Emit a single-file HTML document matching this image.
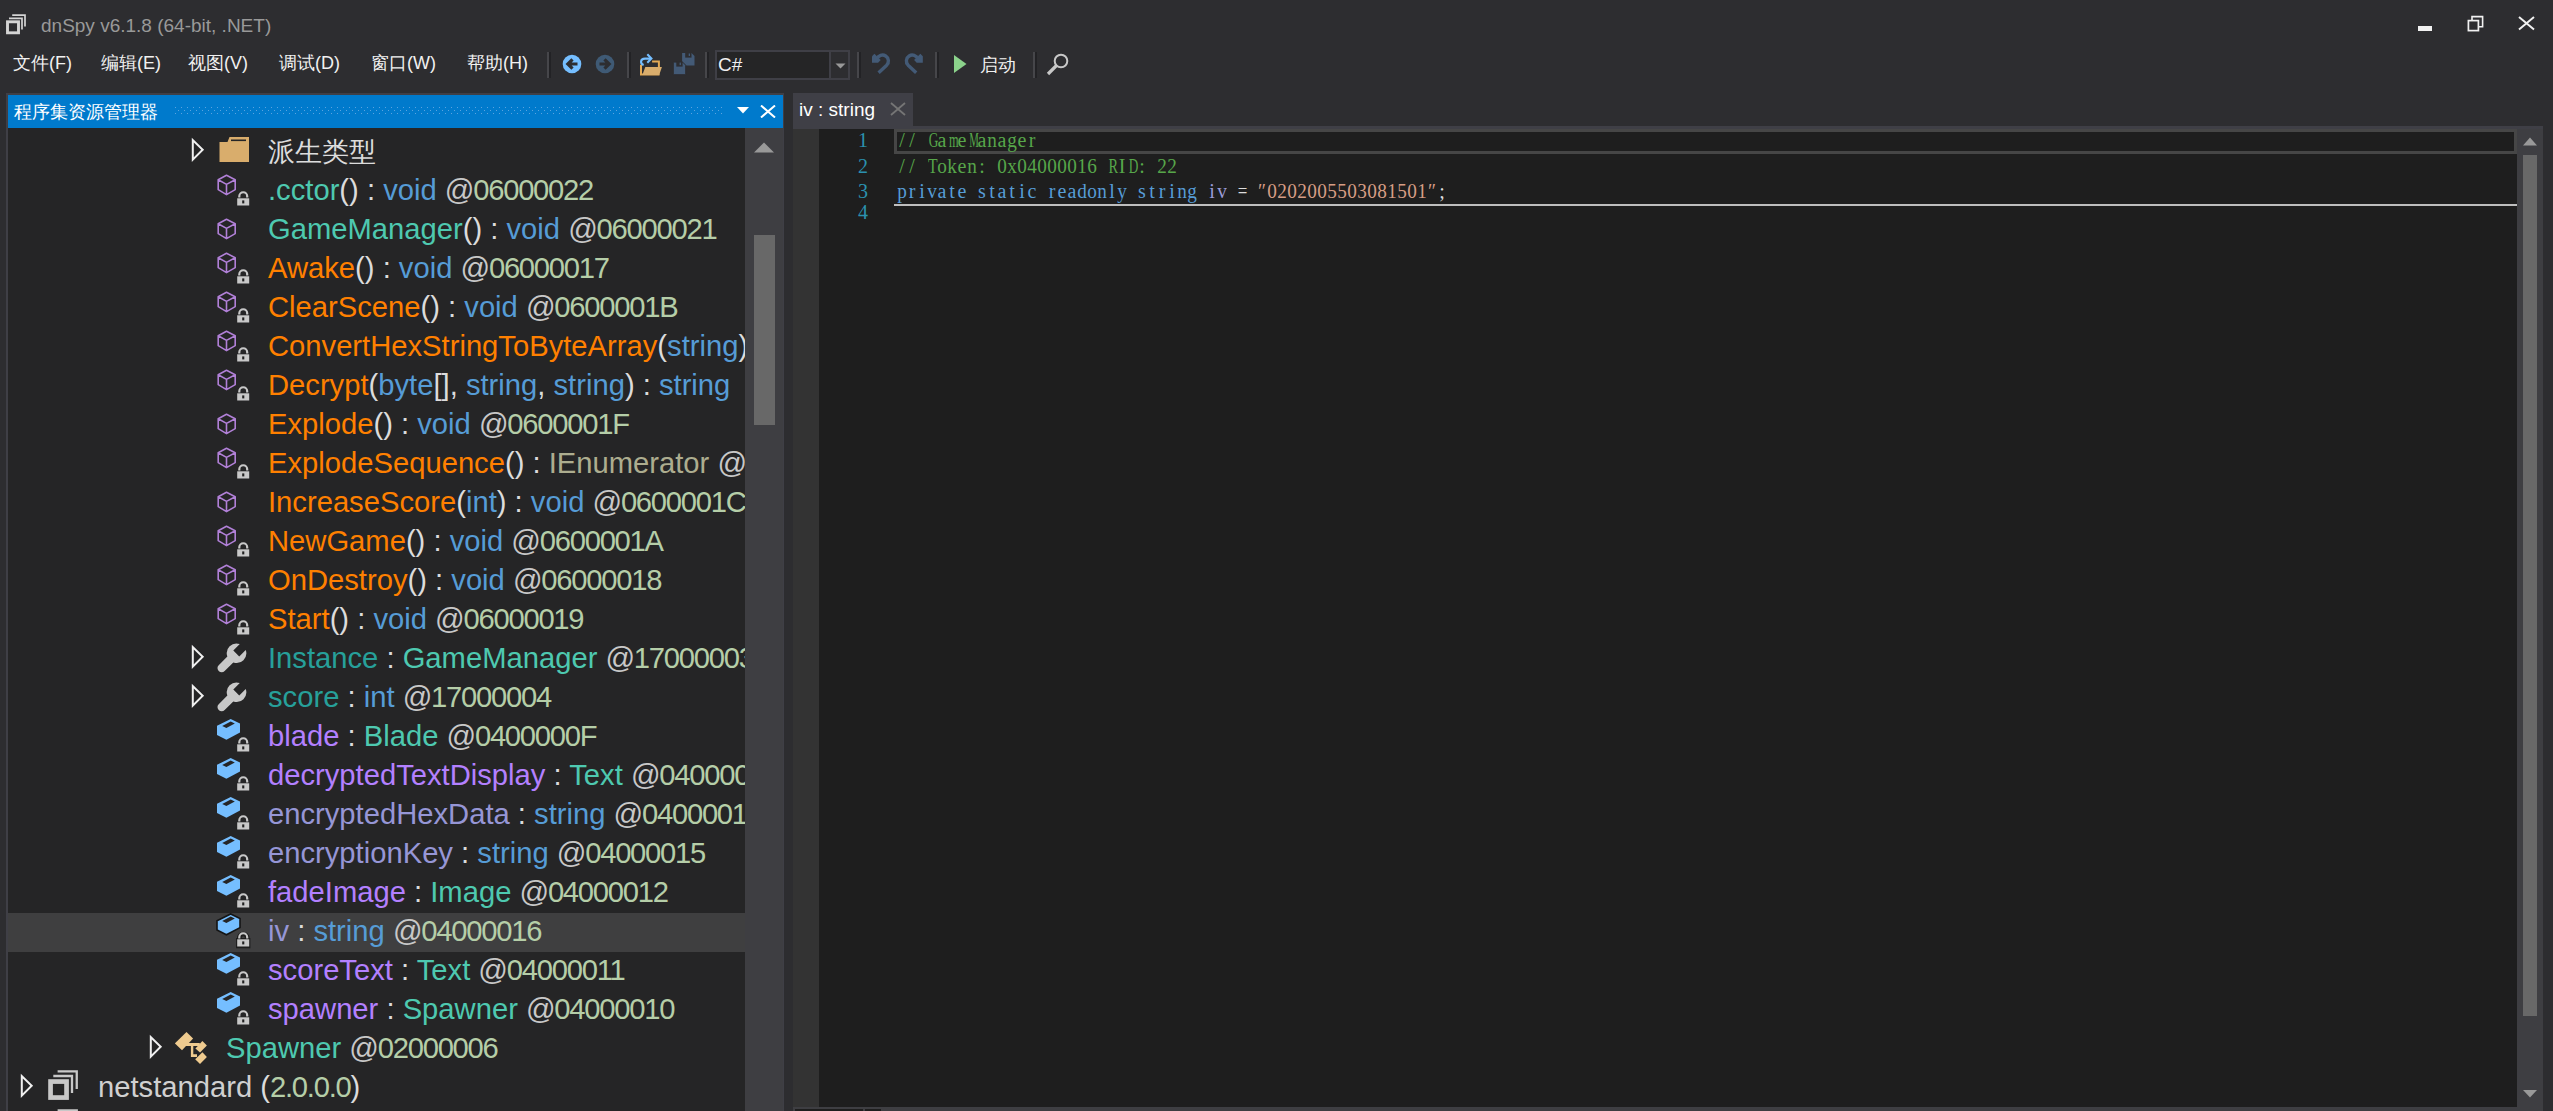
<!DOCTYPE html>
<html><head><meta charset="utf-8"><style>
html,body{margin:0;padding:0;}
body{width:2553px;height:1111px;overflow:hidden;background:#2D2D30;position:relative;font-family:"Liberation Sans",sans-serif;}
.a{position:absolute;}
.tt{position:absolute;white-space:pre;font-size:29.2px;line-height:39px;height:39px;letter-spacing:0px}
.menu{position:absolute;top:50px;font-size:18px;line-height:26px;color:#F1F1F1;white-space:pre}
.sep{position:absolute;top:52px;width:2px;height:26px;background:#46464A;border-right:2px solid #222225}
.code{position:absolute;left:897px;font-family:"Liberation Serif",serif;font-size:20px;white-space:pre;line-height:20px}
.code i{font-style:normal;display:inline-block;width:10px;text-align:center}
.ln{position:absolute;left:840px;width:28px;text-align:right;font-family:"Liberation Serif",serif;font-size:20px;color:#2B91AF;line-height:20px}
</style></head><body>
<!-- title bar -->
<svg class="a" style="left:4px;top:12px" width="26" height="26" viewBox="0 0 26 26">
 <rect x="3.5" y="9.8" width="11" height="11" fill="none" stroke="#D4D4D4" stroke-width="2.9"/>
 <path d="M5 6.3 H18 V17.5" fill="none" stroke="#D4D4D4" stroke-width="1.7"/>
 <path d="M8.2 3.1 H21 V14.5" fill="none" stroke="#D4D4D4" stroke-width="1.7"/>
</svg>
<div class="a" style="left:41px;top:13.6px;font-size:19px;line-height:24px;color:#999999;white-space:pre">dnSpy v6.1.8 (64-bit, .NET)</div>
<div class="a" style="left:2418px;top:26px;width:14px;height:5px;background:#F1F1F1"></div>
<svg class="a" style="left:2467px;top:15px" width="18" height="18" viewBox="0 0 18 18"><rect x="1.4" y="5.6" width="10" height="10" fill="none" stroke="#F1F1F1" stroke-width="1.7"/><path d="M5 5.6 V1.6 H15.6 V11.8 H11.4" fill="none" stroke="#F1F1F1" stroke-width="1.6"/></svg>
<svg class="a" style="left:2518px;top:16px" width="17" height="15" viewBox="0 0 17 15"><path d="M1 1 L16 13.5 M16 1 L1 13.5" stroke="#F1F1F1" stroke-width="2"/></svg>

<!-- menu -->
<div class="menu" style="left:13px">文件(F)</div>
<div class="menu" style="left:101px">编辑(E)</div>
<div class="menu" style="left:188px">视图(V)</div>
<div class="menu" style="left:279px">调试(D)</div>
<div class="menu" style="left:371px">窗口(W)</div>
<div class="menu" style="left:467px">帮助(H)</div>
<div class="sep" style="left:547px"></div>
<svg class="a" style="left:562px;top:54px" width="20" height="20" viewBox="0 0 20 20"><circle cx="10" cy="10" r="9.3" fill="#75BEFF"/><path d="M15.5 10 H6.5 M10.5 5.3 L5.8 10 L10.5 14.7" fill="none" stroke="#2D2D30" stroke-width="3.2"/></svg>
<svg class="a" style="left:595px;top:54px" width="20" height="20" viewBox="0 0 20 20"><circle cx="10" cy="10" r="9.3" fill="#3F5A75"/><path d="M4.5 10 H13.5 M9.5 5.3 L14.2 10 L9.5 14.7" fill="none" stroke="#2D2D30" stroke-width="3.2"/></svg>
<div class="sep" style="left:627px"></div>
<svg class="a" style="left:636px;top:50px" width="64" height="28" viewBox="0 0 64 28">
 <path d="M5 14.8 V24.4 H23.5 M16.1 11.45 H22.9 V17.5" fill="none" stroke="#E3AA55" stroke-width="2"/>
 <path d="M6.3 24.9 L9.3 17.1 L25.9 17.1 L23.2 24.9 Z" fill="#D9AD6C"/>
 <path d="M7.6 15 C4 13.6 4 8.6 9 8.6 H15" fill="none" stroke="#75BEFF" stroke-width="2.1"/>
 <path d="M11.3 4.3 L15.4 8.5 L11.3 12.7" fill="none" stroke="#75BEFF" stroke-width="2.1"/>
 <path d="M46.1 3 H55.5 L58.5 6.1 V15.6 H46.1 Z" fill="#435A76"/>
 <rect x="49.2" y="3" width="6.3" height="4.6" fill="#2D2D30"/><rect x="52.7" y="3.5" width="1.3" height="2.5" fill="#435A76"/>
 <path d="M37.3 12.1 H46.6 L49.7 15.2 V24.7 H37.3 Z" fill="#435A76" stroke="#2D2D30" stroke-width="1"/>
 <rect x="40.3" y="11.6" width="6.3" height="5" fill="#2D2D30"/><rect x="43.6" y="12.6" width="1.3" height="2.5" fill="#435A76"/>
</svg>
<div class="sep" style="left:705px"></div>
<div class="a" style="left:715px;top:50px;width:131px;height:26px;border:2px solid #3F3F46;background:#252526"></div>
<div class="a" style="left:829px;top:52px;width:2px;height:26px;background:#3F3F46"></div>
<div class="a" style="left:831px;top:52px;width:17px;height:26px;background:#2D2D30"></div>
<svg class="a" style="left:835px;top:63px" width="11" height="6" viewBox="0 0 11 6"><path d="M0.5 0.5 H10.5 L5.5 5.5 Z" fill="#999999"/></svg>
<div class="a" style="left:718px;top:52px;font-size:19px;line-height:26px;color:#F1F1F1">C#</div>
<div class="sep" style="left:857px"></div>
<svg class="a" style="left:866px;top:50px" width="64" height="28" viewBox="0 0 64 28">
 <path d="M10.96 8.98 A5.9 5.9 0 1 1 20.67 15.17 L12.6 22.7" fill="none" stroke="#435A76" stroke-width="3.4"/>
 <path d="M6 6.3 L8.4 3.8 L14.7 9.9 L12.1 12.8 L6 12.8 Z" fill="#435A76"/>
 <g transform="translate(62.8 0) scale(-1 1)">
 <path d="M10.96 8.98 A5.9 5.9 0 1 1 20.67 15.17 L12.6 22.7" fill="none" stroke="#435A76" stroke-width="3.4"/>
 <path d="M6 6.3 L8.4 3.8 L14.7 9.9 L12.1 12.8 L6 12.8 Z" fill="#435A76"/>
 </g>
</svg>
<div class="sep" style="left:935px"></div>
<svg class="a" style="left:954px;top:55px" width="13" height="19" viewBox="0 0 13 19"><path d="M0 0 L12.5 9 L0 18 Z" fill="#8BD28B"/></svg>
<div class="menu" style="left:980px;top:51.5px">启动</div>
<div class="sep" style="left:1033px"></div>
<svg class="a" style="left:1046px;top:53px" width="23" height="23" viewBox="0 0 23 23"><circle cx="15" cy="8" r="6.3" fill="none" stroke="#C8C8C8" stroke-width="2"/><path d="M10.5 12.5 L2 21" stroke="#C8C8C8" stroke-width="3.2"/></svg>

<!-- left panel -->
<div class="a" style="left:6px;top:93px;width:778px;height:1018px;background:#3F3F46"></div>
<div class="a" style="left:8px;top:95px;width:775px;height:33px;background:#007ACC"></div>
<div class="a" style="left:14px;top:99px;font-size:18px;line-height:26px;color:#FFFFFF;white-space:pre">程序集资源管理器</div>
<svg class="a" style="left:175px;top:107px" width="548" height="8">
 <defs><pattern id="dots" width="6" height="6" patternUnits="userSpaceOnUse"><rect x="0" y="0" width="1" height="1" fill="#5BA4E0"/><rect x="3" y="3" width="1" height="1" fill="#5BA4E0"/></pattern></defs>
 <rect x="0" y="0" width="548" height="7" fill="url(#dots)"/>
</svg>
<svg class="a" style="left:737px;top:107px" width="12" height="7" viewBox="0 0 12 7"><path d="M0 0 H12 L6 6.5 Z" fill="#FFFFFF"/></svg>
<svg class="a" style="left:760px;top:105px" width="16" height="13" viewBox="0 0 16 13"><path d="M1 0.5 L15 12.5 M15 0.5 L1 12.5" stroke="#FFFFFF" stroke-width="2"/></svg>
<div class="a" style="left:8px;top:128px;width:737px;height:983px;background:#252526;overflow:hidden">
<div class="a" style="left:-8px;top:-128px;width:2553px;height:1111px">
<svg style="position:absolute;left:191px;top:137px" width="15" height="26" viewBox="0 0 15 26"><path fill-rule="evenodd" d="M0.8 0.7 L13.1 12.85 L0.8 25 Z M2.8 5.5 L10.24 12.85 L2.8 20.2 Z" fill="#F0F0F0"/></svg>
<svg style="position:absolute;left:219px;top:136px" width="31" height="27" viewBox="0 0 31 27"><path d="M0.5 6 L8.5 6 L10.5 1 L30 1 L30 26 L0.5 26 Z" fill="#D9AD6C"/><path d="M12 4.3 L27 4.3" stroke="#252526" stroke-width="1.6"/></svg>
<div class="tt" style="left:268px;top:131.5px"><span style="color:#DCDCDC;font-size:27px">派生类型</span></div>
<svg style="position:absolute;left:217px;top:174px" width="20" height="23" viewBox="0 0 20 23"><path d="M9.5 1.2 L18.2 5.8 L18.2 15.6 L9.5 20.6 L1.2 15.6 L1.2 5.8 Z M1.2 5.8 L9.5 10.4 L18.2 5.8 M9.5 10.4 L9.5 20.6" fill="none" stroke="#B180D7" stroke-width="1.6" stroke-linejoin="round"/></svg>
<svg style="position:absolute;left:235px;top:188.5px" width="17" height="20" viewBox="-2 -2 17 20"><path d="M2.3 6.6 V5.2 A3.95 3.95 0 0 1 10.2 5.2 V6.6" fill="none" stroke="#C8C8C8" stroke-width="2.2"/><rect x="0.2" y="7.3" width="12" height="7.2" fill="#C8C8C8"/><rect x="5.2" y="9.4" width="2.1" height="3" fill="#202020"/></svg>
<div class="tt" style="left:268px;top:170.5px"><span style="color:#4EC9B0">.cctor</span><span style="color:#DCDCDC">() : </span><span style="color:#569CD6">void</span><span style="color:#DCDCDC"> </span><span style="color:#C8C8C8;letter-spacing:-1.25px">@</span><span style="color:#B5CEA8;letter-spacing:-1.25px">06000022</span></div>
<svg style="position:absolute;left:217px;top:218px" width="20" height="23" viewBox="0 0 20 23"><path d="M9.5 1.2 L18.2 5.8 L18.2 15.6 L9.5 20.6 L1.2 15.6 L1.2 5.8 Z M1.2 5.8 L9.5 10.4 L18.2 5.8 M9.5 10.4 L9.5 20.6" fill="none" stroke="#B180D7" stroke-width="1.6" stroke-linejoin="round"/></svg>
<div class="tt" style="left:268px;top:209.5px"><span style="color:#4EC9B0">GameManager</span><span style="color:#DCDCDC">() : </span><span style="color:#569CD6">void</span><span style="color:#DCDCDC"> </span><span style="color:#C8C8C8;letter-spacing:-1.25px">@</span><span style="color:#B5CEA8;letter-spacing:-1.25px">06000021</span></div>
<svg style="position:absolute;left:217px;top:252px" width="20" height="23" viewBox="0 0 20 23"><path d="M9.5 1.2 L18.2 5.8 L18.2 15.6 L9.5 20.6 L1.2 15.6 L1.2 5.8 Z M1.2 5.8 L9.5 10.4 L18.2 5.8 M9.5 10.4 L9.5 20.6" fill="none" stroke="#B180D7" stroke-width="1.6" stroke-linejoin="round"/></svg>
<svg style="position:absolute;left:235px;top:266.5px" width="17" height="20" viewBox="-2 -2 17 20"><path d="M2.3 6.6 V5.2 A3.95 3.95 0 0 1 10.2 5.2 V6.6" fill="none" stroke="#C8C8C8" stroke-width="2.2"/><rect x="0.2" y="7.3" width="12" height="7.2" fill="#C8C8C8"/><rect x="5.2" y="9.4" width="2.1" height="3" fill="#202020"/></svg>
<div class="tt" style="left:268px;top:248.5px"><span style="color:#FF8000">Awake</span><span style="color:#DCDCDC">() : </span><span style="color:#569CD6">void</span><span style="color:#DCDCDC"> </span><span style="color:#C8C8C8;letter-spacing:-1.25px">@</span><span style="color:#B5CEA8;letter-spacing:-1.25px">06000017</span></div>
<svg style="position:absolute;left:217px;top:291px" width="20" height="23" viewBox="0 0 20 23"><path d="M9.5 1.2 L18.2 5.8 L18.2 15.6 L9.5 20.6 L1.2 15.6 L1.2 5.8 Z M1.2 5.8 L9.5 10.4 L18.2 5.8 M9.5 10.4 L9.5 20.6" fill="none" stroke="#B180D7" stroke-width="1.6" stroke-linejoin="round"/></svg>
<svg style="position:absolute;left:235px;top:305.5px" width="17" height="20" viewBox="-2 -2 17 20"><path d="M2.3 6.6 V5.2 A3.95 3.95 0 0 1 10.2 5.2 V6.6" fill="none" stroke="#C8C8C8" stroke-width="2.2"/><rect x="0.2" y="7.3" width="12" height="7.2" fill="#C8C8C8"/><rect x="5.2" y="9.4" width="2.1" height="3" fill="#202020"/></svg>
<div class="tt" style="left:268px;top:287.5px"><span style="color:#FF8000">ClearScene</span><span style="color:#DCDCDC">() : </span><span style="color:#569CD6">void</span><span style="color:#DCDCDC"> </span><span style="color:#C8C8C8;letter-spacing:-1.25px">@</span><span style="color:#B5CEA8;letter-spacing:-1.25px">0600001B</span></div>
<svg style="position:absolute;left:217px;top:330px" width="20" height="23" viewBox="0 0 20 23"><path d="M9.5 1.2 L18.2 5.8 L18.2 15.6 L9.5 20.6 L1.2 15.6 L1.2 5.8 Z M1.2 5.8 L9.5 10.4 L18.2 5.8 M9.5 10.4 L9.5 20.6" fill="none" stroke="#B180D7" stroke-width="1.6" stroke-linejoin="round"/></svg>
<svg style="position:absolute;left:235px;top:344.5px" width="17" height="20" viewBox="-2 -2 17 20"><path d="M2.3 6.6 V5.2 A3.95 3.95 0 0 1 10.2 5.2 V6.6" fill="none" stroke="#C8C8C8" stroke-width="2.2"/><rect x="0.2" y="7.3" width="12" height="7.2" fill="#C8C8C8"/><rect x="5.2" y="9.4" width="2.1" height="3" fill="#202020"/></svg>
<div class="tt" style="left:268px;top:326.5px"><span style="color:#FF8000">ConvertHexStringToByteArray</span><span style="color:#DCDCDC">(</span><span style="color:#569CD6">string</span><span style="color:#DCDCDC">) : </span><span style="color:#569CD6">byte</span><span style="color:#DCDCDC">[] </span><span style="color:#DCDCDC"> </span><span style="color:#C8C8C8;letter-spacing:-1.25px">@</span><span style="color:#B5CEA8;letter-spacing:-1.25px">0600001E</span></div>
<svg style="position:absolute;left:217px;top:369px" width="20" height="23" viewBox="0 0 20 23"><path d="M9.5 1.2 L18.2 5.8 L18.2 15.6 L9.5 20.6 L1.2 15.6 L1.2 5.8 Z M1.2 5.8 L9.5 10.4 L18.2 5.8 M9.5 10.4 L9.5 20.6" fill="none" stroke="#B180D7" stroke-width="1.6" stroke-linejoin="round"/></svg>
<svg style="position:absolute;left:235px;top:383.5px" width="17" height="20" viewBox="-2 -2 17 20"><path d="M2.3 6.6 V5.2 A3.95 3.95 0 0 1 10.2 5.2 V6.6" fill="none" stroke="#C8C8C8" stroke-width="2.2"/><rect x="0.2" y="7.3" width="12" height="7.2" fill="#C8C8C8"/><rect x="5.2" y="9.4" width="2.1" height="3" fill="#202020"/></svg>
<div class="tt" style="left:268px;top:365.5px"><span style="color:#FF8000">Decrypt</span><span style="color:#DCDCDC">(</span><span style="color:#569CD6">byte</span><span style="color:#DCDCDC">[], </span><span style="color:#569CD6">string</span><span style="color:#DCDCDC">, </span><span style="color:#569CD6">string</span><span style="color:#DCDCDC">) : </span><span style="color:#569CD6">string</span></div>
<svg style="position:absolute;left:217px;top:413px" width="20" height="23" viewBox="0 0 20 23"><path d="M9.5 1.2 L18.2 5.8 L18.2 15.6 L9.5 20.6 L1.2 15.6 L1.2 5.8 Z M1.2 5.8 L9.5 10.4 L18.2 5.8 M9.5 10.4 L9.5 20.6" fill="none" stroke="#B180D7" stroke-width="1.6" stroke-linejoin="round"/></svg>
<div class="tt" style="left:268px;top:404.5px"><span style="color:#FF8000">Explode</span><span style="color:#DCDCDC">() : </span><span style="color:#569CD6">void</span><span style="color:#DCDCDC"> </span><span style="color:#C8C8C8;letter-spacing:-1.25px">@</span><span style="color:#B5CEA8;letter-spacing:-1.25px">0600001F</span></div>
<svg style="position:absolute;left:217px;top:447px" width="20" height="23" viewBox="0 0 20 23"><path d="M9.5 1.2 L18.2 5.8 L18.2 15.6 L9.5 20.6 L1.2 15.6 L1.2 5.8 Z M1.2 5.8 L9.5 10.4 L18.2 5.8 M9.5 10.4 L9.5 20.6" fill="none" stroke="#B180D7" stroke-width="1.6" stroke-linejoin="round"/></svg>
<svg style="position:absolute;left:235px;top:461.5px" width="17" height="20" viewBox="-2 -2 17 20"><path d="M2.3 6.6 V5.2 A3.95 3.95 0 0 1 10.2 5.2 V6.6" fill="none" stroke="#C8C8C8" stroke-width="2.2"/><rect x="0.2" y="7.3" width="12" height="7.2" fill="#C8C8C8"/><rect x="5.2" y="9.4" width="2.1" height="3" fill="#202020"/></svg>
<div class="tt" style="left:268px;top:443.5px"><span style="color:#FF8000">ExplodeSequence</span><span style="color:#DCDCDC">() : </span><span style="color:#ADAD8F">IEnumerator</span><span style="color:#DCDCDC"> </span><span style="color:#C8C8C8;letter-spacing:-1.25px">@</span><span style="color:#B5CEA8;letter-spacing:-1.25px">06000020</span></div>
<svg style="position:absolute;left:217px;top:491px" width="20" height="23" viewBox="0 0 20 23"><path d="M9.5 1.2 L18.2 5.8 L18.2 15.6 L9.5 20.6 L1.2 15.6 L1.2 5.8 Z M1.2 5.8 L9.5 10.4 L18.2 5.8 M9.5 10.4 L9.5 20.6" fill="none" stroke="#B180D7" stroke-width="1.6" stroke-linejoin="round"/></svg>
<div class="tt" style="left:268px;top:482.5px"><span style="color:#FF8000">IncreaseScore</span><span style="color:#DCDCDC">(</span><span style="color:#569CD6">int</span><span style="color:#DCDCDC">) : </span><span style="color:#569CD6">void</span><span style="color:#DCDCDC"> </span><span style="color:#C8C8C8;letter-spacing:-1.25px">@</span><span style="color:#B5CEA8;letter-spacing:-1.25px">0600001C</span></div>
<svg style="position:absolute;left:217px;top:525px" width="20" height="23" viewBox="0 0 20 23"><path d="M9.5 1.2 L18.2 5.8 L18.2 15.6 L9.5 20.6 L1.2 15.6 L1.2 5.8 Z M1.2 5.8 L9.5 10.4 L18.2 5.8 M9.5 10.4 L9.5 20.6" fill="none" stroke="#B180D7" stroke-width="1.6" stroke-linejoin="round"/></svg>
<svg style="position:absolute;left:235px;top:539.5px" width="17" height="20" viewBox="-2 -2 17 20"><path d="M2.3 6.6 V5.2 A3.95 3.95 0 0 1 10.2 5.2 V6.6" fill="none" stroke="#C8C8C8" stroke-width="2.2"/><rect x="0.2" y="7.3" width="12" height="7.2" fill="#C8C8C8"/><rect x="5.2" y="9.4" width="2.1" height="3" fill="#202020"/></svg>
<div class="tt" style="left:268px;top:521.5px"><span style="color:#FF8000">NewGame</span><span style="color:#DCDCDC">() : </span><span style="color:#569CD6">void</span><span style="color:#DCDCDC"> </span><span style="color:#C8C8C8;letter-spacing:-1.25px">@</span><span style="color:#B5CEA8;letter-spacing:-1.25px">0600001A</span></div>
<svg style="position:absolute;left:217px;top:564px" width="20" height="23" viewBox="0 0 20 23"><path d="M9.5 1.2 L18.2 5.8 L18.2 15.6 L9.5 20.6 L1.2 15.6 L1.2 5.8 Z M1.2 5.8 L9.5 10.4 L18.2 5.8 M9.5 10.4 L9.5 20.6" fill="none" stroke="#B180D7" stroke-width="1.6" stroke-linejoin="round"/></svg>
<svg style="position:absolute;left:235px;top:578.5px" width="17" height="20" viewBox="-2 -2 17 20"><path d="M2.3 6.6 V5.2 A3.95 3.95 0 0 1 10.2 5.2 V6.6" fill="none" stroke="#C8C8C8" stroke-width="2.2"/><rect x="0.2" y="7.3" width="12" height="7.2" fill="#C8C8C8"/><rect x="5.2" y="9.4" width="2.1" height="3" fill="#202020"/></svg>
<div class="tt" style="left:268px;top:560.5px"><span style="color:#FF8000">OnDestroy</span><span style="color:#DCDCDC">() : </span><span style="color:#569CD6">void</span><span style="color:#DCDCDC"> </span><span style="color:#C8C8C8;letter-spacing:-1.25px">@</span><span style="color:#B5CEA8;letter-spacing:-1.25px">06000018</span></div>
<svg style="position:absolute;left:217px;top:603px" width="20" height="23" viewBox="0 0 20 23"><path d="M9.5 1.2 L18.2 5.8 L18.2 15.6 L9.5 20.6 L1.2 15.6 L1.2 5.8 Z M1.2 5.8 L9.5 10.4 L18.2 5.8 M9.5 10.4 L9.5 20.6" fill="none" stroke="#B180D7" stroke-width="1.6" stroke-linejoin="round"/></svg>
<svg style="position:absolute;left:235px;top:617.5px" width="17" height="20" viewBox="-2 -2 17 20"><path d="M2.3 6.6 V5.2 A3.95 3.95 0 0 1 10.2 5.2 V6.6" fill="none" stroke="#C8C8C8" stroke-width="2.2"/><rect x="0.2" y="7.3" width="12" height="7.2" fill="#C8C8C8"/><rect x="5.2" y="9.4" width="2.1" height="3" fill="#202020"/></svg>
<div class="tt" style="left:268px;top:599.5px"><span style="color:#FF8000">Start</span><span style="color:#DCDCDC">() : </span><span style="color:#569CD6">void</span><span style="color:#DCDCDC"> </span><span style="color:#C8C8C8;letter-spacing:-1.25px">@</span><span style="color:#B5CEA8;letter-spacing:-1.25px">06000019</span></div>
<svg style="position:absolute;left:191px;top:644px" width="15" height="26" viewBox="0 0 15 26"><path fill-rule="evenodd" d="M0.8 0.7 L13.1 12.85 L0.8 25 Z M2.8 5.5 L10.24 12.85 L2.8 20.2 Z" fill="#F0F0F0"/></svg>
<svg style="position:absolute;left:216.2px;top:643.1px" width="33.5" height="33.5" viewBox="0 0 31 31"><path d="M22 1 A9 9 0 0 0 10.5 12.5 L2.5 20.5 A3.5 3.5 0 0 0 8 26 L16 18 A9 9 0 0 0 27.5 6.5 L21.5 12.5 L16 7 Z" fill="#C8C8C8"/></svg>
<div class="tt" style="left:268px;top:638.5px"><span style="color:#27A09A">Instance</span><span style="color:#DCDCDC"> : </span><span style="color:#4EC9B0">GameManager</span><span style="color:#DCDCDC"> </span><span style="color:#C8C8C8;letter-spacing:-1.25px">@</span><span style="color:#B5CEA8;letter-spacing:-1.25px">17000003</span></div>
<svg style="position:absolute;left:191px;top:683px" width="15" height="26" viewBox="0 0 15 26"><path fill-rule="evenodd" d="M0.8 0.7 L13.1 12.85 L0.8 25 Z M2.8 5.5 L10.24 12.85 L2.8 20.2 Z" fill="#F0F0F0"/></svg>
<svg style="position:absolute;left:216.2px;top:682.1px" width="33.5" height="33.5" viewBox="0 0 31 31"><path d="M22 1 A9 9 0 0 0 10.5 12.5 L2.5 20.5 A3.5 3.5 0 0 0 8 26 L16 18 A9 9 0 0 0 27.5 6.5 L21.5 12.5 L16 7 Z" fill="#C8C8C8"/></svg>
<div class="tt" style="left:268px;top:677.5px"><span style="color:#27A09A">score</span><span style="color:#DCDCDC"> : </span><span style="color:#569CD6">int</span><span style="color:#DCDCDC"> </span><span style="color:#C8C8C8;letter-spacing:-1.25px">@</span><span style="color:#B5CEA8;letter-spacing:-1.25px">17000004</span></div>
<svg style="position:absolute;left:215px;top:716px" width="29" height="28" viewBox="-2 -2 29 28"><path d="M13.7 1 L23 5.5 L23 14.6 L9.4 21.8 L0 17 L0 7.8 Z" fill="#75BEFF"/><path d="M5.2 8 L9.4 10 L17.8 5.5 L13.7 3.5 Z" fill="#252526"/></svg>
<svg style="position:absolute;left:235px;top:734.5px" width="17" height="20" viewBox="-2 -2 17 20"><path d="M2.3 6.6 V5.2 A3.95 3.95 0 0 1 10.2 5.2 V6.6" fill="none" stroke="#C8C8C8" stroke-width="2.2"/><rect x="0.2" y="7.3" width="12" height="7.2" fill="#C8C8C8"/><rect x="5.2" y="9.4" width="2.1" height="3" fill="#202020"/></svg>
<div class="tt" style="left:268px;top:716.5px"><span style="color:#B380FF">blade</span><span style="color:#DCDCDC"> : </span><span style="color:#4EC9B0">Blade</span><span style="color:#DCDCDC"> </span><span style="color:#C8C8C8;letter-spacing:-1.25px">@</span><span style="color:#B5CEA8;letter-spacing:-1.25px">0400000F</span></div>
<svg style="position:absolute;left:215px;top:755px" width="29" height="28" viewBox="-2 -2 29 28"><path d="M13.7 1 L23 5.5 L23 14.6 L9.4 21.8 L0 17 L0 7.8 Z" fill="#75BEFF"/><path d="M5.2 8 L9.4 10 L17.8 5.5 L13.7 3.5 Z" fill="#252526"/></svg>
<svg style="position:absolute;left:235px;top:773.5px" width="17" height="20" viewBox="-2 -2 17 20"><path d="M2.3 6.6 V5.2 A3.95 3.95 0 0 1 10.2 5.2 V6.6" fill="none" stroke="#C8C8C8" stroke-width="2.2"/><rect x="0.2" y="7.3" width="12" height="7.2" fill="#C8C8C8"/><rect x="5.2" y="9.4" width="2.1" height="3" fill="#202020"/></svg>
<div class="tt" style="left:268px;top:755.5px"><span style="color:#B380FF">decryptedTextDisplay</span><span style="color:#DCDCDC"> : </span><span style="color:#4EC9B0">Text</span><span style="color:#DCDCDC"> </span><span style="color:#C8C8C8;letter-spacing:-1.25px">@</span><span style="color:#B5CEA8;letter-spacing:-1.25px">04000013</span></div>
<svg style="position:absolute;left:215px;top:794px" width="29" height="28" viewBox="-2 -2 29 28"><path d="M13.7 1 L23 5.5 L23 14.6 L9.4 21.8 L0 17 L0 7.8 Z" fill="#75BEFF"/><path d="M5.2 8 L9.4 10 L17.8 5.5 L13.7 3.5 Z" fill="#252526"/></svg>
<svg style="position:absolute;left:235px;top:812.5px" width="17" height="20" viewBox="-2 -2 17 20"><path d="M2.3 6.6 V5.2 A3.95 3.95 0 0 1 10.2 5.2 V6.6" fill="none" stroke="#C8C8C8" stroke-width="2.2"/><rect x="0.2" y="7.3" width="12" height="7.2" fill="#C8C8C8"/><rect x="5.2" y="9.4" width="2.1" height="3" fill="#202020"/></svg>
<div class="tt" style="left:268px;top:794.5px"><span style="color:#9696D6">encryptedHexData</span><span style="color:#DCDCDC"> : </span><span style="color:#569CD6">string</span><span style="color:#DCDCDC"> </span><span style="color:#C8C8C8;letter-spacing:-1.25px">@</span><span style="color:#B5CEA8;letter-spacing:-1.25px">04000014</span></div>
<svg style="position:absolute;left:215px;top:833px" width="29" height="28" viewBox="-2 -2 29 28"><path d="M13.7 1 L23 5.5 L23 14.6 L9.4 21.8 L0 17 L0 7.8 Z" fill="#75BEFF"/><path d="M5.2 8 L9.4 10 L17.8 5.5 L13.7 3.5 Z" fill="#252526"/></svg>
<svg style="position:absolute;left:235px;top:851.5px" width="17" height="20" viewBox="-2 -2 17 20"><path d="M2.3 6.6 V5.2 A3.95 3.95 0 0 1 10.2 5.2 V6.6" fill="none" stroke="#C8C8C8" stroke-width="2.2"/><rect x="0.2" y="7.3" width="12" height="7.2" fill="#C8C8C8"/><rect x="5.2" y="9.4" width="2.1" height="3" fill="#202020"/></svg>
<div class="tt" style="left:268px;top:833.5px"><span style="color:#9696D6">encryptionKey</span><span style="color:#DCDCDC"> : </span><span style="color:#569CD6">string</span><span style="color:#DCDCDC"> </span><span style="color:#C8C8C8;letter-spacing:-1.25px">@</span><span style="color:#B5CEA8;letter-spacing:-1.25px">04000015</span></div>
<svg style="position:absolute;left:215px;top:872px" width="29" height="28" viewBox="-2 -2 29 28"><path d="M13.7 1 L23 5.5 L23 14.6 L9.4 21.8 L0 17 L0 7.8 Z" fill="#75BEFF"/><path d="M5.2 8 L9.4 10 L17.8 5.5 L13.7 3.5 Z" fill="#252526"/></svg>
<svg style="position:absolute;left:235px;top:890.5px" width="17" height="20" viewBox="-2 -2 17 20"><path d="M2.3 6.6 V5.2 A3.95 3.95 0 0 1 10.2 5.2 V6.6" fill="none" stroke="#C8C8C8" stroke-width="2.2"/><rect x="0.2" y="7.3" width="12" height="7.2" fill="#C8C8C8"/><rect x="5.2" y="9.4" width="2.1" height="3" fill="#202020"/></svg>
<div class="tt" style="left:268px;top:872.5px"><span style="color:#B380FF">fadeImage</span><span style="color:#DCDCDC"> : </span><span style="color:#4EC9B0">Image</span><span style="color:#DCDCDC"> </span><span style="color:#C8C8C8;letter-spacing:-1.25px">@</span><span style="color:#B5CEA8;letter-spacing:-1.25px">04000012</span></div>
<div style="position:absolute;left:0;top:913px;width:745px;height:39px;background:#3F3F40"></div>
<svg style="position:absolute;left:215px;top:911px" width="29" height="28" viewBox="-2 -2 29 28"><path d="M13.7 1 L23 5.5 L23 14.6 L9.4 21.8 L0 17 L0 7.8 Z" fill="#75BEFF" stroke="#151515" stroke-width="1.6"/><path d="M5.2 8 L9.4 10 L17.8 5.5 L13.7 3.5 Z" fill="#252526"/></svg>
<svg style="position:absolute;left:235px;top:929.5px" width="17" height="20" viewBox="-2 -2 17 20"><path d="M2.3 8 V6 A3.95 3.95 0 0 1 10.2 6 V8" fill="none" stroke="#1E1E1E" stroke-width="4.6"/><rect x="-1" y="6" width="14.4" height="10.3" fill="#1E1E1E"/><path d="M2.3 6.6 V5.2 A3.95 3.95 0 0 1 10.2 5.2 V6.6" fill="none" stroke="#C8C8C8" stroke-width="2.2"/><rect x="0.2" y="7.3" width="12" height="7.2" fill="#C8C8C8"/><rect x="5.2" y="9.4" width="2.1" height="3" fill="#202020"/></svg>
<div class="tt" style="left:268px;top:911.5px"><span style="color:#9696D6">iv</span><span style="color:#DCDCDC"> : </span><span style="color:#569CD6">string</span><span style="color:#DCDCDC"> </span><span style="color:#C8C8C8;letter-spacing:-1.25px">@</span><span style="color:#B5CEA8;letter-spacing:-1.25px">04000016</span></div>
<svg style="position:absolute;left:215px;top:950px" width="29" height="28" viewBox="-2 -2 29 28"><path d="M13.7 1 L23 5.5 L23 14.6 L9.4 21.8 L0 17 L0 7.8 Z" fill="#75BEFF"/><path d="M5.2 8 L9.4 10 L17.8 5.5 L13.7 3.5 Z" fill="#252526"/></svg>
<svg style="position:absolute;left:235px;top:968.5px" width="17" height="20" viewBox="-2 -2 17 20"><path d="M2.3 6.6 V5.2 A3.95 3.95 0 0 1 10.2 5.2 V6.6" fill="none" stroke="#C8C8C8" stroke-width="2.2"/><rect x="0.2" y="7.3" width="12" height="7.2" fill="#C8C8C8"/><rect x="5.2" y="9.4" width="2.1" height="3" fill="#202020"/></svg>
<div class="tt" style="left:268px;top:950.5px"><span style="color:#B380FF">scoreText</span><span style="color:#DCDCDC"> : </span><span style="color:#4EC9B0">Text</span><span style="color:#DCDCDC"> </span><span style="color:#C8C8C8;letter-spacing:-1.25px">@</span><span style="color:#B5CEA8;letter-spacing:-1.25px">04000011</span></div>
<svg style="position:absolute;left:215px;top:989px" width="29" height="28" viewBox="-2 -2 29 28"><path d="M13.7 1 L23 5.5 L23 14.6 L9.4 21.8 L0 17 L0 7.8 Z" fill="#75BEFF"/><path d="M5.2 8 L9.4 10 L17.8 5.5 L13.7 3.5 Z" fill="#252526"/></svg>
<svg style="position:absolute;left:235px;top:1007.5px" width="17" height="20" viewBox="-2 -2 17 20"><path d="M2.3 6.6 V5.2 A3.95 3.95 0 0 1 10.2 5.2 V6.6" fill="none" stroke="#C8C8C8" stroke-width="2.2"/><rect x="0.2" y="7.3" width="12" height="7.2" fill="#C8C8C8"/><rect x="5.2" y="9.4" width="2.1" height="3" fill="#202020"/></svg>
<div class="tt" style="left:268px;top:989.5px"><span style="color:#B380FF">spawner</span><span style="color:#DCDCDC"> : </span><span style="color:#4EC9B0">Spawner</span><span style="color:#DCDCDC"> </span><span style="color:#C8C8C8;letter-spacing:-1.25px">@</span><span style="color:#B5CEA8;letter-spacing:-1.25px">04000010</span></div>
<svg style="position:absolute;left:149px;top:1034px" width="15" height="26" viewBox="0 0 15 26"><path fill-rule="evenodd" d="M0.8 0.7 L13.1 12.85 L0.8 25 Z M2.8 5.5 L10.24 12.85 L2.8 20.2 Z" fill="#F0F0F0"/></svg>
<svg style="position:absolute;left:175px;top:1031px" width="33" height="34" viewBox="0 0 33 34"><path d="M11.5 1 L18.1 7.5 L7 19.2 L-0.1 12.4 Z" fill="#EFCB8F"/><path d="M27.4 9.9 L31.9 14.6 L25 21.5 L20.4 17.4 Z" fill="#EFCB8F"/><path d="M27.4 21.3 L31.9 26.1 L25 33 L20.2 28.3 Z" fill="#EFCB8F"/><path d="M12 12 H24.8 V15 H18.3 V23.3 H22 V26.1 H15.9 V15 H10 Z" fill="#EFCB8F"/></svg>
<div class="tt" style="left:226px;top:1028.5px"><span style="color:#4EC9B0">Spawner</span><span style="color:#DCDCDC"> </span><span style="color:#C8C8C8;letter-spacing:-1.25px">@</span><span style="color:#B5CEA8;letter-spacing:-1.25px">02000006</span></div>
<svg style="position:absolute;left:20px;top:1073px" width="15" height="26" viewBox="0 0 15 26"><path fill-rule="evenodd" d="M0.8 0.7 L13.1 12.85 L0.8 25 Z M2.8 5.5 L10.24 12.85 L2.8 20.2 Z" fill="#F0F0F0"/></svg>
<svg style="position:absolute;left:48px;top:1069px" width="31" height="31" viewBox="0 0 31 31"><rect x="2.55" y="12.55" width="16" height="16" fill="none" stroke="#C8C8C8" stroke-width="4.7"/><path d="M5.3 7 H24 V23.9" fill="none" stroke="#C8C8C8" stroke-width="2.3"/><path d="M9.6 2.3 H28.75 V20" fill="none" stroke="#C8C8C8" stroke-width="2.3"/></svg>
<div class="tt" style="left:98px;top:1067.5px"><span style="color:#D0D0D0">netstandard</span><span style="color:#DCDCDC"> (</span><span style="color:#B5CEA8;letter-spacing:-1.25px">2.0.0.0</span><span style="color:#DCDCDC">)</span></div>
<svg style="position:absolute;left:20px;top:1112px" width="15" height="26" viewBox="0 0 15 26"><path fill-rule="evenodd" d="M0.8 0.7 L13.1 12.85 L0.8 25 Z M2.8 5.5 L10.24 12.85 L2.8 20.2 Z" fill="#F0F0F0"/></svg>
<svg style="position:absolute;left:48px;top:1108px" width="31" height="31" viewBox="0 0 31 31"><rect x="2.55" y="12.55" width="16" height="16" fill="none" stroke="#C8C8C8" stroke-width="4.7"/><path d="M5.3 7 H24 V23.9" fill="none" stroke="#C8C8C8" stroke-width="2.3"/><path d="M9.6 2.3 H28.75 V20" fill="none" stroke="#C8C8C8" stroke-width="2.3"/></svg>
</div></div>
<div class="a" style="left:745px;top:128px;width:38px;height:983px;background:#3E3E42"></div>
<svg class="a" style="left:754px;top:142px" width="20" height="11" viewBox="0 0 20 11"><path d="M0 10.5 L10 0.5 L20 10.5 Z" fill="#999999"/></svg>
<div class="a" style="left:754px;top:235px;width:21px;height:190px;background:#686868"></div>

<!-- right panel -->
<div class="a" style="left:793px;top:93px;width:120px;height:36px;background:#3F3F46"></div>
<div class="a" style="left:799px;top:97px;font-size:19px;line-height:26px;color:#FFFFFF;white-space:pre">iv : string</div>
<svg class="a" style="left:890px;top:102px" width="16" height="14" viewBox="0 0 16 14"><path d="M1 1 L15 13 M15 1 L1 13" stroke="#757575" stroke-width="1.8"/></svg>
<div class="a" style="left:793px;top:126px;width:1750px;height:3px;background:#3F3F46"></div>
<div class="a" style="left:793px;top:129px;width:26px;height:978px;background:#333333"></div>
<div class="a" style="left:819px;top:129px;width:1698px;height:978px;background:#1E1E1E"></div>
<div class="a" style="left:894px;top:129px;width:1617px;height:19px;border:3px solid #464646"></div>
<div class="a" style="left:894px;top:204px;width:1623px;height:2px;background:#BEBEBE"></div>
<div class="ln" style="top:130px">1</div>
<div class="ln" style="top:156.3px">2</div>
<div class="ln" style="top:181.4px">3</div>
<div class="ln" style="top:202.1px">4</div>
<div class="code" style="top:130px"><i style="color:#57A64A">/</i><i style="color:#57A64A">/</i><i> </i><i style="color:#57A64A;transform:scaleX(0.664)">G</i><i style="color:#57A64A">a</i><i style="color:#57A64A;transform:scaleX(0.617)">m</i><i style="color:#57A64A">e</i><i style="color:#57A64A;transform:scaleX(0.539)">M</i><i style="color:#57A64A">a</i><i style="color:#57A64A;transform:scaleX(0.960)">n</i><i style="color:#57A64A">a</i><i style="color:#57A64A;transform:scaleX(0.960)">g</i><i style="color:#57A64A">e</i><i style="color:#57A64A">r</i></div>
<div class="code" style="top:156.3px"><i style="color:#57A64A">/</i><i style="color:#57A64A">/</i><i> </i><i style="color:#57A64A;transform:scaleX(0.786)">T</i><i style="color:#57A64A;transform:scaleX(0.960)">o</i><i style="color:#57A64A;transform:scaleX(0.960)">k</i><i style="color:#57A64A">e</i><i style="color:#57A64A;transform:scaleX(0.960)">n</i><i style="color:#57A64A">:</i><i> </i><i style="color:#57A64A;transform:scaleX(0.960)">0</i><i style="color:#57A64A;transform:scaleX(0.960)">x</i><i style="color:#57A64A;transform:scaleX(0.960)">0</i><i style="color:#57A64A;transform:scaleX(0.960)">4</i><i style="color:#57A64A;transform:scaleX(0.960)">0</i><i style="color:#57A64A;transform:scaleX(0.960)">0</i><i style="color:#57A64A;transform:scaleX(0.960)">0</i><i style="color:#57A64A;transform:scaleX(0.960)">0</i><i style="color:#57A64A;transform:scaleX(0.960)">1</i><i style="color:#57A64A;transform:scaleX(0.960)">6</i><i> </i><i style="color:#57A64A;transform:scaleX(0.719)">R</i><i style="color:#57A64A">I</i><i style="color:#57A64A;transform:scaleX(0.664)">D</i><i style="color:#57A64A">:</i><i> </i><i style="color:#57A64A;transform:scaleX(0.960)">2</i><i style="color:#57A64A;transform:scaleX(0.960)">2</i></div>
<div class="code" style="top:181.4px"><i style="color:#569CD6;transform:scaleX(0.960)">p</i><i style="color:#569CD6">r</i><i style="color:#569CD6">i</i><i style="color:#569CD6;transform:scaleX(0.960)">v</i><i style="color:#569CD6">a</i><i style="color:#569CD6">t</i><i style="color:#569CD6">e</i><i> </i><i style="color:#569CD6">s</i><i style="color:#569CD6">t</i><i style="color:#569CD6">a</i><i style="color:#569CD6">t</i><i style="color:#569CD6">i</i><i style="color:#569CD6">c</i><i> </i><i style="color:#569CD6">r</i><i style="color:#569CD6">e</i><i style="color:#569CD6">a</i><i style="color:#569CD6;transform:scaleX(0.960)">d</i><i style="color:#569CD6;transform:scaleX(0.960)">o</i><i style="color:#569CD6;transform:scaleX(0.960)">n</i><i style="color:#569CD6">l</i><i style="color:#569CD6;transform:scaleX(0.960)">y</i><i> </i><i style="color:#569CD6">s</i><i style="color:#569CD6">t</i><i style="color:#569CD6">r</i><i style="color:#569CD6">i</i><i style="color:#569CD6;transform:scaleX(0.960)">n</i><i style="color:#569CD6;transform:scaleX(0.960)">g</i><i> </i><i style="color:#9B9BD8">i</i><i style="color:#9B9BD8;transform:scaleX(0.960)">v</i><i> </i><i style="color:#DCDCDC;transform:scaleX(0.851)">=</i><i> </i><i style="color:#D69D85;transform:scaleX(0.960)">″</i><i style="color:#D69D85;transform:scaleX(0.960)">0</i><i style="color:#D69D85;transform:scaleX(0.960)">2</i><i style="color:#D69D85;transform:scaleX(0.960)">0</i><i style="color:#D69D85;transform:scaleX(0.960)">2</i><i style="color:#D69D85;transform:scaleX(0.960)">0</i><i style="color:#D69D85;transform:scaleX(0.960)">0</i><i style="color:#D69D85;transform:scaleX(0.960)">5</i><i style="color:#D69D85;transform:scaleX(0.960)">5</i><i style="color:#D69D85;transform:scaleX(0.960)">0</i><i style="color:#D69D85;transform:scaleX(0.960)">3</i><i style="color:#D69D85;transform:scaleX(0.960)">0</i><i style="color:#D69D85;transform:scaleX(0.960)">8</i><i style="color:#D69D85;transform:scaleX(0.960)">1</i><i style="color:#D69D85;transform:scaleX(0.960)">5</i><i style="color:#D69D85;transform:scaleX(0.960)">0</i><i style="color:#D69D85;transform:scaleX(0.960)">1</i><i style="color:#D69D85;transform:scaleX(0.960)">″</i><i style="color:#DCDCDC">;</i></div>
<div class="a" style="left:2517px;top:129px;width:26px;height:982px;background:#3E3E42"></div>
<svg class="a" style="left:2523px;top:137px" width="14" height="9" viewBox="0 0 14 9"><path d="M0 8.5 L7 0.5 L14 8.5 Z" fill="#999999"/></svg>
<div class="a" style="left:2523px;top:155px;width:14px;height:861px;background:#686868"></div>
<svg class="a" style="left:2523px;top:1090px" width="14" height="8" viewBox="0 0 14 8"><path d="M0 0 H14 L7 7.5 Z" fill="#999999"/></svg>
<div class="a" style="left:793px;top:1107px;width:1724px;height:4px;background:#3E3E42"></div>
<div class="a" style="left:795px;top:1109px;width:68px;height:2px;background:#1E1E1E"></div>
<div class="a" style="left:865px;top:1109px;width:16px;height:2px;background:#1E1E1E"></div>
</body></html>
